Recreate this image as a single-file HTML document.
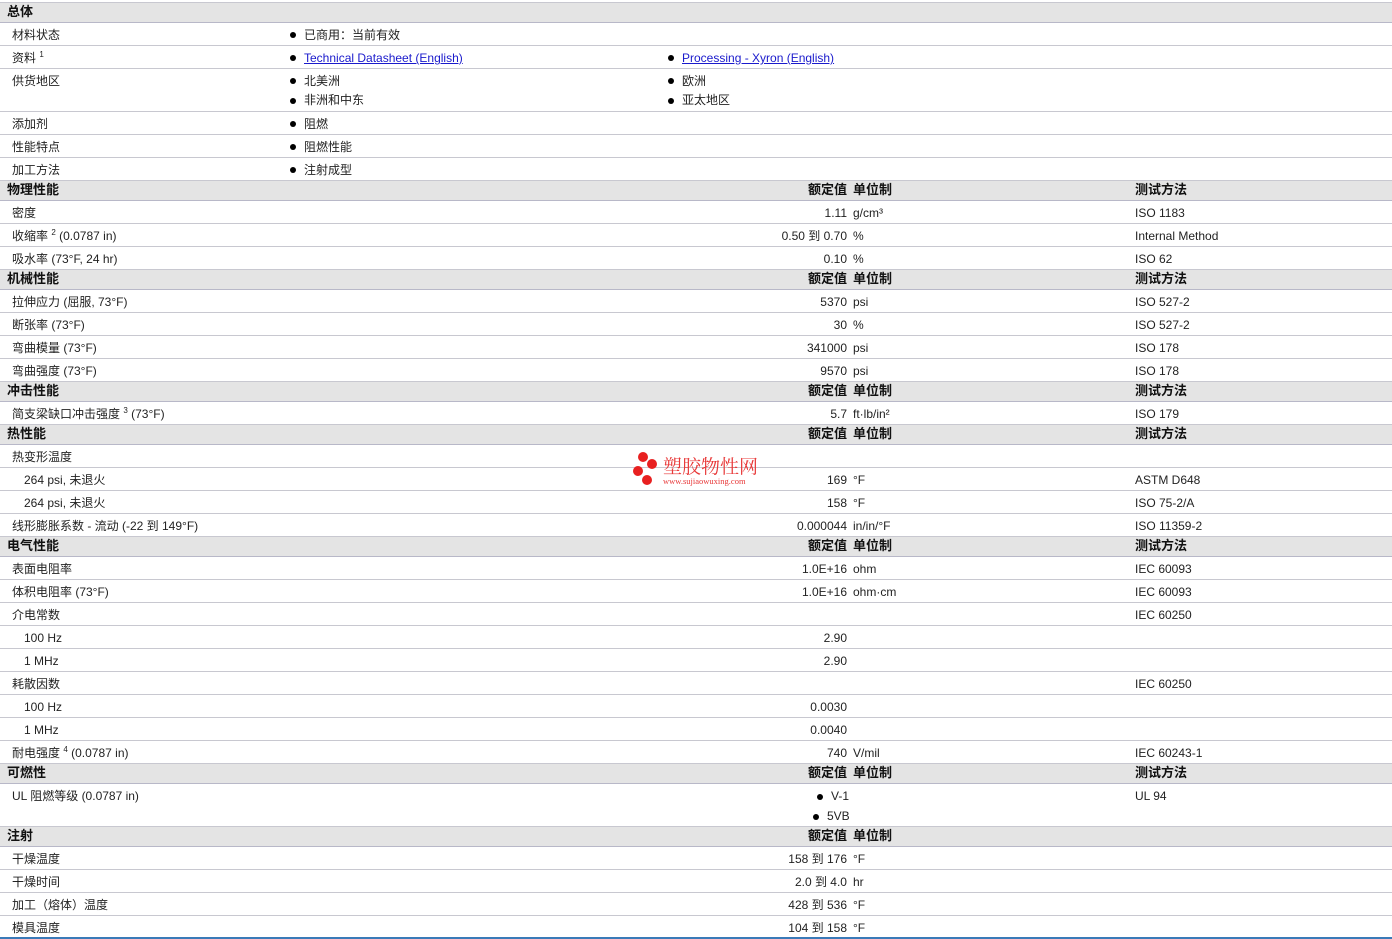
<!DOCTYPE html>
<html><head><meta charset="utf-8">
<style>
body{margin:0;width:1392px;height:939px;background:#fff;position:relative;overflow:hidden;font-family:"Liberation Sans","Noto Sans CJK SC",sans-serif;font-size:12px;color:#222}
.r{position:absolute;left:0;width:1392px;border-bottom:1px solid #c8c8d0;box-sizing:border-box}
.h{background:#e4e4e4;font-weight:bold;font-size:13px;color:#111;border-bottom:1px solid #b8b8c8;border-top:1px solid #c8c8d0}
.c{position:absolute;top:2px;line-height:20px;white-space:nowrap}
.h .c{top:0;line-height:18px}
.v{right:545px;text-align:right}
.u{left:853px}
.m{left:1135px}
.l{left:12px}
.i{left:24px}
.hl{left:7px}
.b{width:6px;height:6px;border-radius:50%;background:#000;position:absolute}
a{color:#1a1acc;text-decoration:underline}
sup{font-size:8px;vertical-align:top;position:relative;top:-3px}
</style></head><body>

<div class="r h" style="top:2px;height:21px"><span class="c hl">总体</span></div>
<div class="r" style="top:23px;height:23px"><span class="c l">材料状态</span><i class="b" style="left:290px;top:9px"></i><span class="c" style="left:304px">已商用：当前有效</span></div>
<div class="r" style="top:46px;height:23px"><span class="c l">资料 <sup>1</sup></span><i class="b" style="left:290px;top:9px"></i><span class="c" style="left:304px"><a>Technical Datasheet (English)</a></span><i class="b" style="left:668px;top:9px"></i><span class="c" style="left:682px"><a>Processing - Xyron (English)</a></span></div>
<div class="r" style="top:69px;height:43px"><span class="c l">供货地区</span><i class="b" style="left:290px;top:9px"></i><span class="c" style="left:304px">北美洲</span><i class="b" style="left:290px;top:29px"></i><span class="c" style="left:304px;top:21px">非洲和中东</span><i class="b" style="left:668px;top:9px"></i><span class="c" style="left:682px">欧洲</span><i class="b" style="left:668px;top:29px"></i><span class="c" style="left:682px;top:21px">亚太地区</span></div>
<div class="r" style="top:112px;height:23px"><span class="c l">添加剂</span><i class="b" style="left:290px;top:9px"></i><span class="c" style="left:304px">阻燃</span></div>
<div class="r" style="top:135px;height:23px"><span class="c l">性能特点</span><i class="b" style="left:290px;top:9px"></i><span class="c" style="left:304px">阻燃性能</span></div>
<div class="r" style="top:158px;height:23px"><span class="c l">加工方法</span><i class="b" style="left:290px;top:9px"></i><span class="c" style="left:304px">注射成型</span></div>

<div class="r h" style="top:180px;height:21px"><span class="c hl">物理性能</span><span class="c v">额定值</span><span class="c u">单位制</span><span class="c m">测试方法</span></div>
<div class="r" style="top:201px;height:23px"><span class="c l">密度</span><span class="c v">1.11</span><span class="c u">g/cm³</span><span class="c m">ISO 1183</span></div>
<div class="r" style="top:224px;height:23px"><span class="c l">收缩率 <sup>2</sup> (0.0787 in)</span><span class="c v">0.50 到 0.70</span><span class="c u">%</span><span class="c m">Internal Method</span></div>
<div class="r" style="top:247px;height:23px"><span class="c l">吸水率 (73°F, 24 hr)</span><span class="c v">0.10</span><span class="c u">%</span><span class="c m">ISO 62</span></div>

<div class="r h" style="top:269px;height:21px"><span class="c hl">机械性能</span><span class="c v">额定值</span><span class="c u">单位制</span><span class="c m">测试方法</span></div>
<div class="r" style="top:290px;height:23px"><span class="c l">拉伸应力 (屈服, 73°F)</span><span class="c v">5370</span><span class="c u">psi</span><span class="c m">ISO 527-2</span></div>
<div class="r" style="top:313px;height:23px"><span class="c l">断张率 (73°F)</span><span class="c v">30</span><span class="c u">%</span><span class="c m">ISO 527-2</span></div>
<div class="r" style="top:336px;height:23px"><span class="c l">弯曲模量 (73°F)</span><span class="c v">341000</span><span class="c u">psi</span><span class="c m">ISO 178</span></div>
<div class="r" style="top:359px;height:23px"><span class="c l">弯曲强度 (73°F)</span><span class="c v">9570</span><span class="c u">psi</span><span class="c m">ISO 178</span></div>

<div class="r h" style="top:381px;height:21px"><span class="c hl">冲击性能</span><span class="c v">额定值</span><span class="c u">单位制</span><span class="c m">测试方法</span></div>
<div class="r" style="top:402px;height:23px"><span class="c l">简支梁缺口冲击强度 <sup>3</sup> (73°F)</span><span class="c v">5.7</span><span class="c u">ft·lb/in²</span><span class="c m">ISO 179</span></div>

<div class="r h" style="top:424px;height:21px"><span class="c hl">热性能</span><span class="c v">额定值</span><span class="c u">单位制</span><span class="c m">测试方法</span></div>
<div class="r" style="top:445px;height:23px"><span class="c l">热变形温度</span></div>
<div class="r" style="top:468px;height:23px"><span class="c i">264 psi, 未退火</span><span class="c v">169</span><span class="c u">°F</span><span class="c m">ASTM D648</span></div>
<div class="r" style="top:491px;height:23px"><span class="c i">264 psi, 未退火</span><span class="c v">158</span><span class="c u">°F</span><span class="c m">ISO 75-2/A</span></div>
<div class="r" style="top:514px;height:23px"><span class="c l">线形膨胀系数 - 流动 (-22 到 149°F)</span><span class="c v">0.000044</span><span class="c u">in/in/°F</span><span class="c m">ISO 11359-2</span></div>

<div class="r h" style="top:536px;height:21px"><span class="c hl">电气性能</span><span class="c v">额定值</span><span class="c u">单位制</span><span class="c m">测试方法</span></div>
<div class="r" style="top:557px;height:23px"><span class="c l">表面电阻率</span><span class="c v">1.0E+16</span><span class="c u">ohm</span><span class="c m">IEC 60093</span></div>
<div class="r" style="top:580px;height:23px"><span class="c l">体积电阻率 (73°F)</span><span class="c v">1.0E+16</span><span class="c u">ohm·cm</span><span class="c m">IEC 60093</span></div>
<div class="r" style="top:603px;height:23px"><span class="c l">介电常数</span><span class="c m">IEC 60250</span></div>
<div class="r" style="top:626px;height:23px"><span class="c i">100 Hz</span><span class="c v">2.90</span></div>
<div class="r" style="top:649px;height:23px"><span class="c i">1 MHz</span><span class="c v">2.90</span></div>
<div class="r" style="top:672px;height:23px"><span class="c l">耗散因数</span><span class="c m">IEC 60250</span></div>
<div class="r" style="top:695px;height:23px"><span class="c i">100 Hz</span><span class="c v">0.0030</span></div>
<div class="r" style="top:718px;height:23px"><span class="c i">1 MHz</span><span class="c v">0.0040</span></div>
<div class="r" style="top:741px;height:23px"><span class="c l">耐电强度 <sup>4</sup> (0.0787 in)</span><span class="c v">740</span><span class="c u">V/mil</span><span class="c m">IEC 60243-1</span></div>

<div class="r h" style="top:763px;height:21px"><span class="c hl">可燃性</span><span class="c v">额定值</span><span class="c u">单位制</span><span class="c m">测试方法</span></div>
<div class="r" style="top:784px;height:43px"><span class="c l">UL 阻燃等级 (0.0787 in)</span><i class="b" style="left:817px;top:10px"></i><span class="c" style="left:831px">V-1</span><i class="b" style="left:813px;top:30px"></i><span class="c" style="left:827px;top:22px">5VB</span><span class="c m">UL 94</span></div>

<div class="r h" style="top:826px;height:21px"><span class="c hl">注射</span><span class="c v">额定值</span><span class="c u">单位制</span></div>
<div class="r" style="top:847px;height:23px"><span class="c l">干燥温度</span><span class="c v">158 到 176</span><span class="c u">°F</span></div>
<div class="r" style="top:870px;height:23px"><span class="c l">干燥时间</span><span class="c v">2.0 到 4.0</span><span class="c u">hr</span></div>
<div class="r" style="top:893px;height:23px"><span class="c l">加工（熔体）温度</span><span class="c v">428 到 536</span><span class="c u">°F</span></div>
<div class="r" style="top:916px;height:22px;border-bottom:none"><span class="c l">模具温度</span><span class="c v">104 到 158</span><span class="c u">°F</span></div>
<div style="position:absolute;left:0;top:937px;width:1392px;height:2px;background:#3a7ab8"></div>

<div style="position:absolute;left:632px;top:452px;width:140px;height:36px">
<i class="b" style="background:#e82020;width:10px;height:10px;left:6px;top:0"></i>
<i class="b" style="background:#e82020;width:10px;height:10px;left:15px;top:7px"></i>
<i class="b" style="background:#e82020;width:10px;height:10px;left:1px;top:14px"></i>
<i class="b" style="background:#e82020;width:10px;height:10px;left:10px;top:23px"></i>
<span style="position:absolute;left:31px;top:3px;color:#e83838;font-size:19px;line-height:22px;font-family:'Noto Serif CJK SC',serif">塑胶物性网</span>
<span style="position:absolute;left:31px;top:24px;color:#e83838;font-size:8.5px;font-family:'Liberation Serif',serif">www.sujiaowuxing.com</span>
</div>
</body></html>
